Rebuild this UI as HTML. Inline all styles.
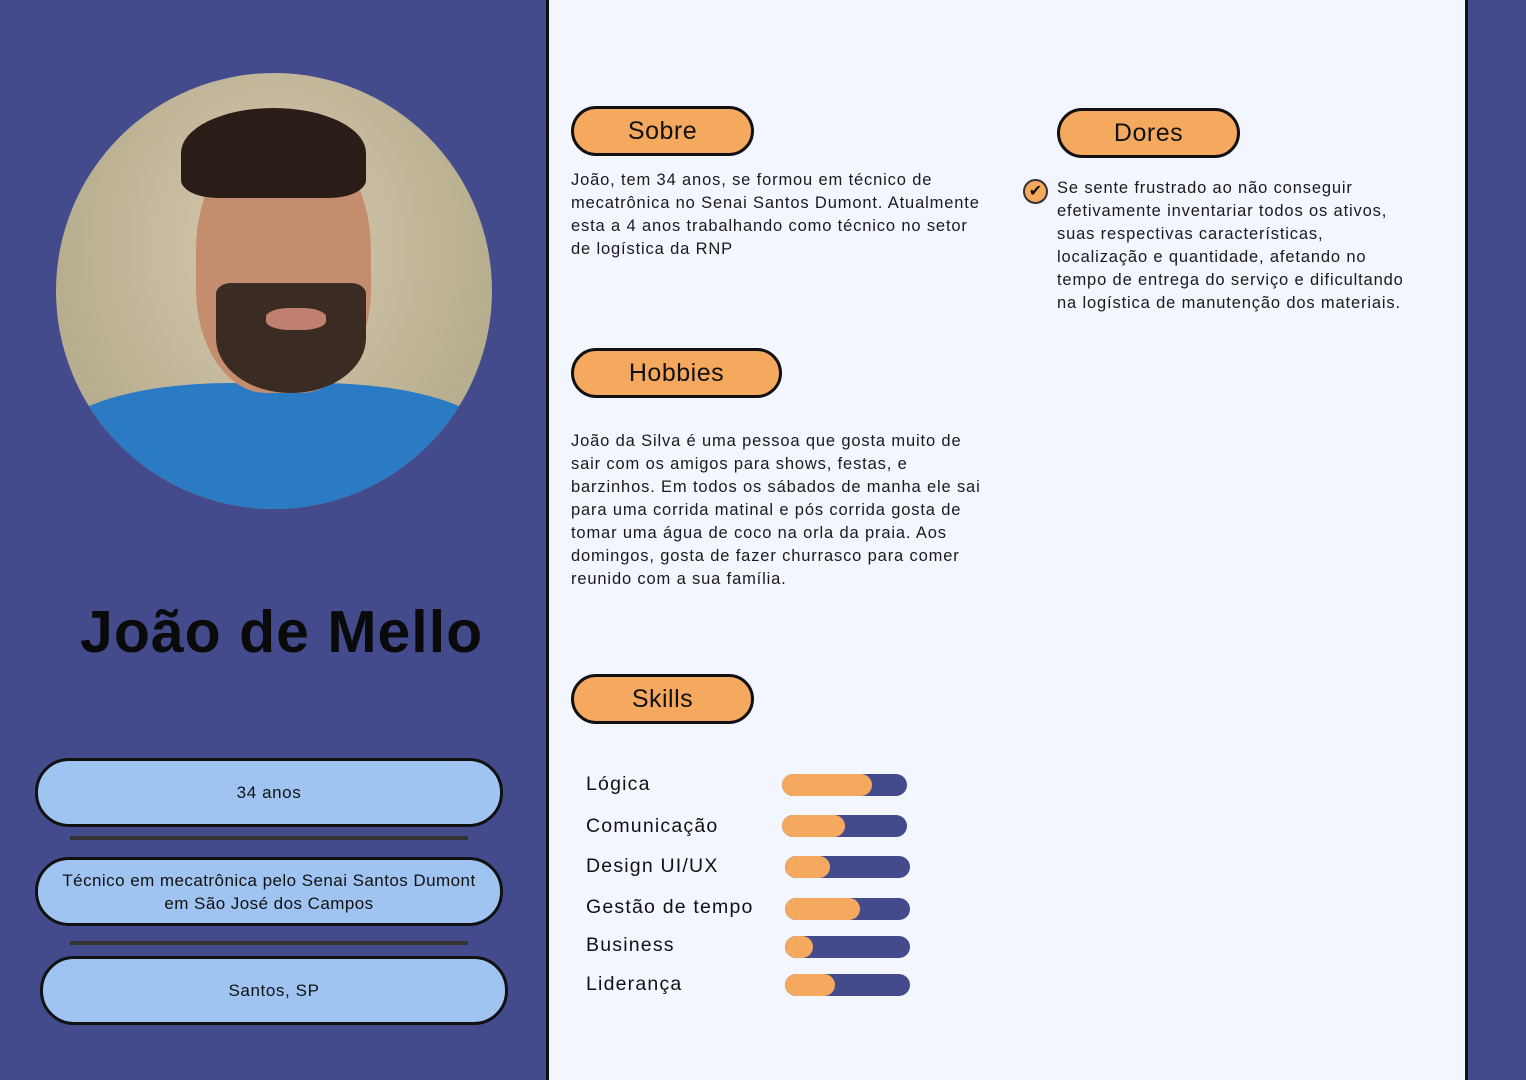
<!DOCTYPE html><html><head><meta charset="utf-8"><style>
*{margin:0;padding:0;box-sizing:border-box}
html,body{width:1526px;height:1080px;overflow:hidden}
body{background:#434b8c;position:relative;font-family:"Liberation Sans",sans-serif;color:#111}
.a{position:absolute}
.panel{left:546px;top:-3px;width:922px;height:1120px;background:#f3f6fe;border:3px solid #111}
.tag{position:absolute;background:#f5a95f;border:3px solid #111;border-radius:26px;font-size:25px;text-align:center;color:#111;letter-spacing:0.5px}
.t{position:absolute;font-size:16.5px;line-height:23px;color:#1a1a1a;white-space:nowrap;letter-spacing:0.85px}
.pill{position:absolute;background:#a0c4f2;border:3px solid #111;border-radius:34px;font-size:17px;text-align:center;display:flex;align-items:center;justify-content:center;line-height:23px;letter-spacing:0.6px;white-space:nowrap}
.ln{position:absolute;height:4px;background:#333;left:70px;width:398px}
.sk{position:absolute;left:586px;font-size:19.5px;letter-spacing:1.2px}
.bar{position:absolute;height:22px;border-radius:11px;background:#434b8c;overflow:hidden;width:125px}
.bar i{display:block;height:100%;background:#f5a95f;border-radius:11px}
</style></head><body>
<div class="a" style="left:56px;top:73px;width:436px;height:436px;border-radius:50%;overflow:hidden;background:radial-gradient(ellipse at 50% 40%,#d8cbb0,#b7ad8f 70%)">
<div class="a" style="left:0;top:310px;width:436px;height:140px;background:#2a7bc4;border-radius:40% 40% 0 0"></div>
<div class="a" style="left:140px;top:60px;width:175px;height:260px;background:#c48d6d;border-radius:45% 45% 40% 40%"></div>
<div class="a" style="left:125px;top:35px;width:185px;height:90px;background:#2a1d17;border-radius:50% 50% 20% 20%"></div>
<div class="a" style="left:160px;top:210px;width:150px;height:110px;background:#3a2b23;border-radius:10% 10% 50% 50%"></div>
<div class="a" style="left:210px;top:235px;width:60px;height:22px;background:#c08070;border-radius:40%"></div>
</div>
<div class="a" style="left:80px;top:598px;font-size:59px;font-weight:bold;color:#0a0a0a;letter-spacing:1px;white-space:nowrap">João de Mello</div>
<div class="pill" style="left:35px;top:758px;width:468px;height:69px">34 anos</div>
<div class="ln" style="top:836px"></div>
<div class="pill" style="left:35px;top:857px;width:468px;height:69px;letter-spacing:0.45px">Técnico em mecatrônica pelo Senai Santos Dumont<br>em São José dos Campos</div>
<div class="ln" style="top:941px"></div>
<div class="pill" style="left:40px;top:956px;width:468px;height:69px">Santos, SP</div>
<div class="a panel"></div>
<div class="tag" style="left:571px;top:106px;width:183px;height:50px;line-height:44px">Sobre</div>
<div class="t" style="left:571px;top:169px">João, tem 34 anos, se formou em técnico de<br>mecatrônica no Senai Santos Dumont. Atualmente<br>esta a 4 anos trabalhando como técnico no setor<br>de logística da RNP</div>
<div class="tag" style="left:1057px;top:108px;width:183px;height:50px;line-height:44px">Dores</div>
<div class="a" style="left:1023px;top:179px;width:25px;height:25px;border-radius:50%;background:#f5a95f;border:2px solid #333;text-align:center;font-size:16px;line-height:21px">✔</div>
<div class="t" style="left:1057px;top:177px">Se sente frustrado ao não conseguir<br>efetivamente inventariar todos os ativos,<br>suas respectivas características,<br>localização e quantidade, afetando no<br>tempo de entrega do serviço e dificultando<br>na logística de manutenção dos materiais.</div>
<div class="tag" style="left:571px;top:348px;width:211px;height:50px;line-height:44px">Hobbies</div>
<div class="t" style="left:571px;top:430px">João da Silva é uma pessoa que gosta muito de<br>sair com os amigos para shows, festas, e<br>barzinhos. Em todos os sábados de manha ele sai<br>para uma corrida matinal e pós corrida gosta de<br>tomar uma água de coco na orla da praia. Aos<br>domingos, gosta de fazer churrasco para comer<br>reunido com a sua família.</div>
<div class="tag" style="left:571px;top:674px;width:183px;height:50px;line-height:44px">Skills</div>
<div class="sk" style="top:773px">Lógica</div><div class="bar" style="left:782px;top:774px"><i style="width:90px"></i></div>
<div class="sk" style="top:815px">Comunicação</div><div class="bar" style="left:782px;top:815px"><i style="width:63px"></i></div>
<div class="sk" style="top:855px">Design UI/UX</div><div class="bar" style="left:785px;top:856px"><i style="width:45px"></i></div>
<div class="sk" style="top:896px">Gestão de tempo</div><div class="bar" style="left:785px;top:898px"><i style="width:75px"></i></div>
<div class="sk" style="top:934px">Business</div><div class="bar" style="left:785px;top:936px"><i style="width:28px"></i></div>
<div class="sk" style="top:973px">Liderança</div><div class="bar" style="left:785px;top:974px"><i style="width:50px"></i></div>
</body></html>
